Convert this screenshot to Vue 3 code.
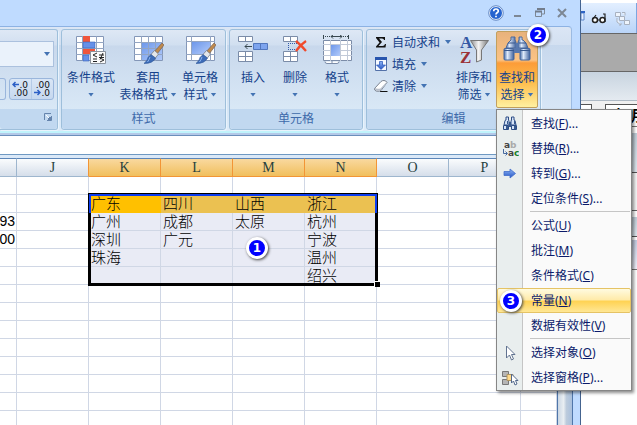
<script setup>
import { ref } from 'vue'

const columns = ['', 'J', 'K', 'L', 'M', 'N', 'O', 'P', '']
const selected = ['K', 'L', 'M', 'N']
const rows = [
  ['', '', '', '', '', '', '', '', ''],
  ['', '', '广东', '四川', '山西', '浙江', '', '', ''],
  ['93', '', '广州', '成都', '太原', '杭州', '', '', ''],
  ['00', '', '深圳', '广元', '', '宁波', '', '', ''],
  ['', '', '珠海', '', '', '温州', '', '', ''],
  ['', '', '', '', '', '绍兴', '', '', ''],
  ...Array.from({ length: 8 }, () => Array(9).fill(''))
]

const isSelected = (r, c) => r >= 1 && r <= 5 && c >= 2 && c <= 5

const menuGroups = [
  [
    { label: '查找', key: 'F', dots: true, icon: 'find' },
    { label: '替换', key: 'R', dots: true, icon: 'replace' },
    { label: '转到', key: 'G', dots: true, icon: 'goto' },
    { label: '定位条件', key: 'S', dots: true }
  ],
  [
    { label: '公式', key: 'U' },
    { label: '批注', key: 'M' },
    { label: '条件格式', key: 'C' },
    { label: '常量', key: 'N', badge: 3 },
    { label: '数据有效性', key: 'V' }
  ],
  [
    { label: '选择对象', key: 'O', icon: 'pointer' },
    { label: '选择窗格', key: 'P', dots: true, icon: 'pane' }
  ]
]
const active = ref('N')
</script>

<template>
  <div class="desktop">
    <svg class="defs" width="0" height="0" aria-hidden="true">
      <defs>
        <linearGradient id="blueCell" x1="0" y1="0" x2="1" y2="1">
          <stop offset="0" stop-color="#6d97ea" /><stop offset="1" stop-color="#b1cafa" />
        </linearGradient>
        <linearGradient id="steel" x1="0" y1="0" x2="1" y2="0">
          <stop offset="0" stop-color="#4a6ea8" /><stop offset=".35" stop-color="#dfeafa" /><stop offset="1" stop-color="#3c5f9c" />
        </linearGradient>
        <linearGradient id="funnel" x1="0" y1="0" x2="1" y2="0">
          <stop offset="0" stop-color="#8b8b8b" /><stop offset=".45" stop-color="#f4f4f4" /><stop offset="1" stop-color="#777" />
        </linearGradient>
        <linearGradient id="arrowBlue" x1="0" y1="0" x2="0" y2="1">
          <stop offset="0" stop-color="#8db5f5" /><stop offset="1" stop-color="#2454c4" />
        </linearGradient>
        <symbol id="brush" viewBox="0 0 20 22">
          <path d="M18 1 L20 3 L13 12 L10 10Z" fill="#c08a4c" stroke="#7c6450" stroke-width=".7" />
          <path d="M10.500 8.500 L14.500 12 L11 16.500 L6.500 13Z" fill="#e3e6ea" stroke="#777f8a" stroke-width=".8" />
          <path d="M7 12.500 L11.500 16 Q9 21.500 0 21.500 Q4 18 4 15.500Z" fill="#3d6cb8" stroke="#254f94" stroke-width=".6" />
          <path d="M6 15 Q5 18 3.500 20" stroke="#8cb5ee" fill="none" />
        </symbol>
        <symbol id="binoculars" viewBox="0 0 28 25">
          <path d="M9 1h3v3l1 2v6H3l2-5 3-3V1Z" fill="url(#steel)" stroke="#4a6799" />
          <path d="M16 1h3v3l1 0 3 3 2 5H15V6l1-2Z" fill="url(#steel)" stroke="#4a6799" />
          <rect x="1" y="12.500" width="10" height="11.500" rx="1" fill="url(#steel)" stroke="#45669d" />
          <rect x="17" y="12.500" width="10" height="11.500" rx="1" fill="url(#steel)" stroke="#45669d" />
          <path d="M11 12h6v5h-6ZM12.500 7h3v5h-3Z" fill="#5878ae" />
          <path d="M1 14.500h10M17 14.500h10M5 7h7M16 7h7" stroke="#38598f" />
        </symbol>
      </defs>
    </svg>

    <main class="excel">
      <header class="titlebar">
        <button class="win help" aria-label="帮助">
          <svg width="16" height="16" viewBox="0 0 16 16"><circle cx="8" cy="8" r="6.500" fill="#2563cf" stroke="#f4f9ff" /><circle cx="8" cy="8" r="7.300" fill="none" stroke="#5578b5" stroke-width=".8" /><path d="M5.700 6.300Q5.700 4 8 4T10.300 6.200C10.300 7.500 8 7.600 8 9.500M8 10.700v1.600" fill="none" stroke="#fff" stroke-width="1.700" /></svg>
        </button>
        <button class="win" aria-label="最小化"><svg width="10" height="10"><path d="M1 8h7" stroke="#7d8794" stroke-width="2" /></svg></button>
        <button class="win" aria-label="还原"><svg width="10" height="10"><path d="M3 1.500h7M9.500 1v5H7M.5 3v5.500h6V3" stroke="#7d8794" fill="none" /><path d="M0 3.500h7M2 1h8" stroke="#737d8c" stroke-width="2" /></svg></button>
        <button class="win" aria-label="关闭"><svg width="10" height="10"><path d="M1 1l8 8M9 1l-8 8" stroke="#7d8794" stroke-width="2" /></svg></button>
      </header>

      <div class="ribbon">
        <section class="group number">
          <div class="content">
            <div class="combo">
              <select aria-label="数字格式"><option></option></select>
              <i class="arrow"></i>
            </div>
            <div class="decimals">
              <button class="piece" aria-label="千位分隔"></button>
              <div class="pair">
                <button aria-label="增加小数位数"><span><svg width="7" height="7" viewBox="0 0 7 7"><path d="M7 3.500H2M3.500 1L1 3.500 3.500 6" stroke="#2c5fc6" stroke-width="1.500" fill="none" /></svg>.0</span><span>.00</span></button>
                <button aria-label="减少小数位数"><span>.00</span><span><svg width="7" height="7" viewBox="0 0 7 7"><path d="M0 3.500h5M3.500 1L6 3.500 3.500 6" stroke="#2c5fc6" stroke-width="1.500" fill="none" /></svg>.0</span></button>
              </div>
            </div>
          </div>
          <h2><button class="launcher" aria-label="更多"><svg width="8" height="8"><path d="M.5 7V.5H7" stroke="#6584ad" fill="none" /><path d="M7.500 3v4.500H3" stroke="#6584ad" fill="none" /><path d="M4 4h3v3H4Z" fill="#6584ad" /><path d="M2 2l3 3" stroke="#fff" /></svg></button></h2>
        </section>

        <section class="group styles">
          <div class="content">
            <button class="big">
              <svg width="32" height="30" viewBox="0 0 32 30">
                <path d="M1.500 1.500h27v24h-27Z" fill="#fff" stroke="#8497b8" />
                <path d="M1 7.500h28M1 13.500h28M1 19.500h28M7.500 1v25M21.500 1v25" stroke="#93a5c2" />
                <path d="M8 1h7v6H8ZM8 14h12v5H8Z" fill="#f0553c" /><path d="M8 7h12v6H8ZM8 20h6v6H8Z" fill="#6690e8" stroke="#3563ba" stroke-width=".6" />
                <path d="M15.500 16.500h15v12h-15Z" fill="#fafafa" stroke="#8a929c" />
                <path d="M22 18l-4 2 4 2M18 24h4M18 26.500h4M24 20h5M24 22.500h5M28 18l-3 6.500M25 23l4 2-4 2" stroke="#222" fill="none" />
              </svg>
              <span>条件格式</span><span class="line"><i class="arrow"></i></span>
            </button>
            <button class="big wide">
              <svg width="32" height="30" viewBox="0 0 32 30">
                <path d="M2.500 1.500h28v24h-28Z" fill="#fff" stroke="#8497b8" /><path d="M9 8h21v17H9Z" fill="url(#blueCell)" />
                <path d="M2 7.500h29M2 13.500h29M2 19.500h29M9.500 1v25M16.500 1v25M23.500 1v25" stroke="#93a5c2" />
                <use href="#brush" x="12" y="7" width="20" height="22" />
              </svg>
              <span>套用</span><span class="line">表格格式<i class="arrow"></i></span>
            </button>
            <button class="big small">
              <svg width="32" height="30" viewBox="0 0 32 30">
                <path d="M2.500 1.500h28v24h-28Z" fill="#fff" stroke="#8497b8" /><path d="M2 6.500h29M2 19.500h29M7.500 1v25M26.500 1v25" stroke="#93a5c2" />
                <path d="M8 7h18v12H8Z" fill="url(#blueCell)" />
                <use href="#brush" x="12" y="7" width="20" height="22" />
              </svg>
              <span>单元格</span><span class="line">样式<i class="arrow"></i></span>
            </button>
          </div>
          <h2>样式</h2>
        </section>

        <section class="group cells">
          <div class="content">
            <button class="big cell">
              <svg width="32" height="30" viewBox="0 0 32 30">
                <path d="M1.500 1.500h14v5h-14ZM1.500 16.500h14v10h-14ZM8.500 1v6M8.500 16v11M1 21.500h15" fill="#fff" stroke="#7b8ca8" />
                <path d="M16.500 8.500h14v6h-14ZM23.500 8v7" fill="#7da4ee" stroke="#5277bd" /><path d="M15 11.500H8M10.500 9L8 11.500l2.500 2.500" stroke="#37474f" fill="none" />
              </svg>
              <span>插入</span><span class="line"><i class="arrow"></i></span>
            </button>
            <button class="big cell">
              <svg width="32" height="30" viewBox="0 0 32 30">
                <path d="M4.500 1.500h14v5h-14ZM4.500 16.500h14v10h-14ZM11.500 1v6M11.500 16v11M4 21.500h15" fill="#fff" stroke="#7b8ca8" />
                <path d="M9 8.500h9M9 14.500h9M9.500 8v7" stroke="#345caa" stroke-dasharray="1 1" />
                <path d="M17 6q5 4 10 10M27 6q-6 4-10 10" stroke="#f04a2c" stroke-width="2.300" fill="none" />
              </svg>
              <span>删除</span><span class="line"><i class="arrow"></i></span>
            </button>
            <button class="big cell">
              <svg width="32" height="30" viewBox="0 0 32 30">
                <path d="M2.500 0v4M27.500 0v4M10 1.500h11M12 0l-2 1.500 2 2M19 0l2 1.500-2 2" stroke="#37474f" fill="none" /><path d="M4 1.500h5M22 1.500h5" stroke="#37474f" stroke-dasharray="1 1" />
                <path d="M2.500 5.500h28v20h-28Z" fill="#fff" stroke="#7b8ca8" /><path d="M2 9.500h29M2 20.500h29M9.500 5v21M19.500 5v21M26.500 5v21M2 15.500h29" stroke="#c2cad8" />
                <path d="M10 10h9v11h-9Z" fill="url(#blueCell)" /><path d="M4 26.500q0 2 2 2h10q2 0 2-2M11 26v2" fill="#fff" stroke="#7b8ca8" />
              </svg>
              <span>格式</span><span class="line"><i class="arrow"></i></span>
            </button>
          </div>
          <h2>单元格</h2>
        </section>

        <section class="group editing">
          <div class="content">
            <div class="stack">
              <button><svg width="16" height="16" viewBox="0 0 16 16"><path d="M3 3h9v3h-1Q11 4.500 9 4.500H6L9 8l-3.500 4H9.500Q11.500 12 12 10h1l-.5 3.500H3v-1L6.500 8.500 3 4Z" fill="#111" /></svg>自动求和<i class="arrow"></i></button>
              <button><svg width="16" height="16" viewBox="0 0 16 16"><path d="M2.500 1.500h11v13h-11Z" fill="#f6faff" stroke="#5371a8" /><path d="M2 2.500h12" stroke="#2855ae" stroke-width="3" /><path d="M6.500 5.500h3v3.500H12.500L8 13.500 3.500 9h3Z" fill="url(#arrowBlue)" stroke="#2150b7" stroke-width=".7" /></svg>填充<i class="arrow"></i></button>
              <button><svg width="16" height="16" viewBox="0 0 16 16"><path d="M7 13.500h7.500" stroke="#111" /><path d="M1.500 10.500L8 3.500q1-1 3-1t3 2L8 12.500q-2 1.500-5 .5-2-1-1.500-2.500Z" fill="#fff" stroke="#798290" /><path d="M2 9.500q1 2 5.500 1L13.500 4v1.500L8 12q-4 2-6-.500Z" fill="#b8c0cc" /></svg>清除<i class="arrow"></i></button>
            </div>
            <button class="big small">
              <svg width="32" height="30" viewBox="0 0 32 30">
                <path d="M12.500 5.500h18L23.500 15v10l-5 2V15Z" fill="url(#funnel)" stroke="#777" />
                <text x="2" y="13" class="letter a">A</text><text x="2" y="28" class="letter z">Z</text>
              </svg>
              <span>排序和</span><span class="line">筛选<i class="arrow"></i></span>
            </button>
            <button class="big find" aria-expanded="true">
              <svg width="32" height="30" viewBox="0 0 32 30"><use href="#binoculars" x="2" y="1" width="28" height="25" /></svg>
              <span>查找和</span><span class="line">选择<i class="arrow"></i></span>
              <b class="badge two">2</b>
            </button>
          </div>
          <h2>编辑</h2>
        </section>
      </div>

      <div class="divider"></div>
      <div class="formula"></div>
      <div class="strip"></div>

      <div class="sheet">
        <div class="grid">
          <table>
            <colgroup><col class="first"><col v-for="n in 7" :key="n" class="std"><col></colgroup>
            <thead>
              <tr><th v-for="(c, i) in columns" :key="i" :class="{ on: selected.includes(c), before: c === 'J' }">{{ c }}</th></tr>
            </thead>
            <tbody>
              <tr v-for="(row, r) in rows" :key="r">
                <td v-for="(cell, c) in row" :key="c" :class="{ sel: isSelected(r, c), gold: isSelected(r, c) && r === 1, current: r === 1 && c === 2, num: c === 0 }">{{ cell }}</td>
              </tr>
            </tbody>
          </table>
          <div class="selection"><i class="edge"></i><i class="handle"></i></div>
          <b class="badge one">1</b>
        </div>
        <div class="scroll"></div>
      </div>
    </main>

    <aside class="behind">
      <div class="tools">
        <svg width="56" height="30" viewBox="0 0 56 30">
          <path d="M0 10h3v7H0Z" fill="#e8f1ff" stroke="#5c86cc" /><path d="M0 9h4" stroke="#2f64c4" stroke-width="2" />
          <circle cx="14" cy="17" r="2.500" fill="#fff" stroke="#222" stroke-width="1.500" /><circle cx="21.500" cy="17" r="2.500" fill="#fff" stroke="#222" stroke-width="1.500" /><path d="M12 16l3-4M16.500 17h2.500M24 19v-8h-2" stroke="#222" stroke-width="1.200" fill="none" />
          <path d="M34.500 9.500h5v4h-5ZM38.500 13.500h5v4h-5ZM43.500 17.500h5v4h-5ZM41 9.500h3v3M36 15v4l4 3M38 22h2v-2" stroke="#a8b1bf" fill="#eef4fc" />
        </svg>
      </div>
      <div class="gray"></div>
      <div class="bar"></div>
      <div class="fields"><span></span><span>声明</span></div>
      <div class="side"></div>
      <div class="blank"></div>
      <div class="side short"></div>
      <div class="tab"></div>
    </aside>

    <nav class="menu" role="menu">
      <div v-for="(group, g) in menuGroups" :key="g" class="section">
        <button v-for="item in group" :key="item.key" role="menuitem" :class="{ active: active === item.key }" @mouseenter="active = item.key">
          <span class="glyph">
            <svg v-if="item.icon === 'find'" width="16" height="16" viewBox="0 0 16 16"><path d="M4 1h2.500v3L7 5v4H2L3 4.500 4 4ZM9.500 1H12v3l1 .5L14 9H9V5l.5-1ZM1.500 9.500h5v4h-5ZM9.500 9.500h5v4h-5Z" fill="#d5e3f7" stroke="#2c4c85" /><path d="M7 6h2v5H7ZM5 5h1v3H5ZM12 5h1v3h-1ZM4 10h2v3H4ZM12 10h2v3h-2Z" fill="#37598f" /></svg>
            <svg v-else-if="item.icon === 'replace'" width="18" height="18" viewBox="0 0 18 18"><text x="3" y="8" class="ab">a<tspan fill="#aaa">b</tspan></text><text x="7" y="16" class="ab">a<tspan fill="#168028">c</tspan></text><path d="M2.500 9v4.500H6M4.500 11.500l2 2-2 2" stroke="#46699f" fill="none" /></svg>
            <svg v-else-if="item.icon === 'goto'" width="16" height="16" viewBox="0 0 16 16"><path d="M2 5.500h6V3l5.500 4.500L8 12V9.500H2Z" fill="url(#arrowBlue)" stroke="#416dca" stroke-width=".8" /></svg>
            <svg v-else-if="item.icon === 'pointer'" width="16" height="16" viewBox="0 0 16 16"><path d="M4.500 1v12l3-3 2 5 2-1-2-4.500H13Z" fill="#fff" stroke="#617390" /></svg>
            <svg v-else-if="item.icon === 'pane'" width="18" height="16" viewBox="0 0 18 16"><path d="M1.500 1.500h6v5h-6ZM1.500 9.500h6v5h-6Z" fill="#b5b5b5" stroke="#777" /><path d="M6 4.500h6v6H6Z" fill="#ffd98a" stroke="#b09560" /><path d="M10.500 4v9l2-2 1.500 4 2-1-1.500-3.500H17Z" fill="#fff" stroke="#53698c" /></svg>
          </span>
          <span>{{ item.label }}(<u>{{ item.key }}</u>){{ item.dots ? '...' : '' }}</span>
          <b v-if="item.badge" class="badge three">{{ item.badge }}</b>
        </button>
      </div>
    </nav>
  </div>
</template>

<style>
body { margin: 0; }
</style>

<style scoped>
* { box-sizing: border-box; }
.desktop { position: relative; display: flex; height: 100vh; overflow: hidden; background: #fff; font: 12px/17px "Noto Sans", "Noto Sans CJK SC", sans-serif; color: #15428b; }
.defs { position: absolute; }
button { margin: 0; padding: 0; border: 0; background: none; font: inherit; color: inherit; }
svg { display: block; flex: none; }
.excel { flex: 1; min-width: 0; display: flex; flex-direction: column; padding-right: 7px; background: #bfdbff; border-right: 1px solid #44638f; }
.titlebar { flex: none; display: flex; align-items: center; justify-content: flex-end; gap: 12px; height: 26px; padding-right: 6px; }
.help { margin-right: -3px; }

.ribbon { flex: none; display: flex; gap: 3px; margin-right: 1px; padding: 2px 0 1px; border-top: 1px solid #8db2e3; border-right: 1px solid #9cbbe2; border-bottom: 2px solid #c0f4fc; border-radius: 0 4px 0 0; background: linear-gradient(#dbe6f5 0, #d3e0f1 18px, #c7d8ed 18px, #dcebf9 100%); }
.group { flex: none; display: flex; flex-direction: column; height: 101px; border: 1px solid #9ebfdb; border-radius: 3px; background: linear-gradient(#dee8f5 0, #d1dff0 15px, #c8d8ec 16px, #d9e8f6 80px); box-shadow: 1px 1px #e8f3fc; }
.content { flex: 1; display: flex; padding: 1px 2px; }
.group h2 { flex: none; height: 20px; margin: 0; background: #c1d8f0; font-size: 12px; font-weight: 400; line-height: 19px; text-align: center; color: #3e6aaa; border-radius: 0 0 3px 3px; }
.number { width: 58px; border-left: 0; border-radius: 0 3px 3px 0; }
.styles { width: 165px; }
.cells { width: 134px; }
.editing { width: 175px; }
.number .content { flex-direction: column; gap: 11px; padding: 11px 3px 0 0; }
.combo { position: relative; height: 26px; }
.combo select { width: 100%; height: 26px; appearance: none; border: 1px solid #abc1de; border-left: 0; border-radius: 0; background: #eaf2fb; }
.combo .arrow { position: absolute; right: 4px; top: 11px; }
.decimals { display: flex; gap: 3px; }
.piece { width: 6px; border: 1px solid #9ab6dc; border-left: 0; border-radius: 0 3px 3px 0; }
.pair { flex: 1; display: flex; height: 22px; border: 1px solid #9ab6dc; border-radius: 3px; background: linear-gradient(#d9e6f6, #c6d8ef); }
.pair button { flex: 1; display: flex; flex-direction: column; align-items: flex-end; justify-content: center; padding-right: 3px; font: 9px/8px "DejaVu Sans", sans-serif; color: #111; }
.pair button + button { border-left: 1px solid #b5cbe7; }
.pair span { display: flex; }
.number h2 { display: flex; justify-content: flex-end; padding: 4px 5px 0 0; }
.launcher { height: 8px; }
.arrow { display: inline-block; flex: none; width: 6px; height: 4px; background: #4373b3; clip-path: polygon(0 0, 100% 0, 50% 100%); }

.big { position: relative; display: flex; flex-direction: column; align-items: center; width: 54px; padding-top: 4px; white-space: nowrap; }
.big svg { margin-bottom: 4px; }
.big .line { display: flex; align-items: center; gap: 3px; min-height: 17px; }
.big.wide { width: 60px; }
.big.small { width: 44px; }
.big.cell { width: 42px; }
.big.find { width: 42px; border: 1px solid #c2a05e; border-radius: 2px; padding-top: 3px; background: linear-gradient(#e8b27c 0, #fbc384 28px, #fc9c38 31px, #fdbd4b 50px, #fff0a0 100%); }
.letter { font: bold 17px "Liberation Serif", serif; }
.letter.a { fill: #3558a4; }
.letter.z { fill: #9b3236; }
.stack { display: flex; flex-direction: column; width: 83px; }
.stack button { display: flex; align-items: center; height: 22px; padding-left: 4px; gap: 3px; }
.stack .arrow { margin-left: 2px; }

.divider { flex: none; height: 3px; background: #b4c9e8; border-bottom: 1px solid #6b8fbc; }
.formula { flex: none; height: 19px; background: #fff; border-bottom: 1px solid #6f99c2; }
.strip { flex: none; height: 3px; background: #dbe9f8; }
.sheet { flex: 1; min-height: 0; display: flex; }
.grid { position: relative; flex: 1; min-width: 0; overflow: hidden; background: #fff; }
.scroll { width: 16px; border: solid #4f76aa; border-width: 1px 1px 0; background: linear-gradient(90deg, #cbd7e4, #e9eef2 40%, #bccbdc 60%, #a9c0dd); }
table { width: 100%; table-layout: fixed; border-collapse: separate; border-spacing: 0; }
.first { width: 17px; }
.std { width: 72px; }
th, td { height: 18px; padding: 0; white-space: nowrap; font-size: 15px; line-height: 17px; font-weight: 400; }
th { height: 19px; border: solid #5d86b8; border-width: 1px 1px 1px 0; border-right-color: #9eb6ce; border-bottom-color: #9eb6ce; background: linear-gradient(#fafcfd, #d5deea); font-family: "Liberation Serif", serif; font-size: 14px; color: #27413e; }
th.on { border-right-color: #f29536; border-bottom-color: #f29536; background: linear-gradient(#f9d99f, #f1bf5d); }
th.before { border-right-color: #f29536; }
td { border: solid #d0d7e5; border-width: 0 1px 1px 0; padding-left: 2px; color: #000; font-weight: 300; }
td.num { padding: 0 2px 0 0; direction: rtl; font: 14px/17px "Liberation Sans", sans-serif; }
td.sel { background: #e9ebf5; }
td.gold { background: #ebc151; border-color: #ebc151; }
td.current { background: #ffc000; border-color: #ffc000; }
.selection { position: absolute; left: 88px; top: 35px; width: 290px; height: 93px; border: 3px solid #000; }
.edge { position: absolute; inset: -2px -2px auto; height: 19px; border: 2px solid #0a3cf0; border-bottom: 0; }
.handle { position: absolute; right: -5px; bottom: -4px; width: 6px; height: 6px; background: #000; border: solid #fff; border-width: 1px 0 0 1px; }

.badge { position: absolute; z-index: 2; width: 22px; height: 22px; border: 3px solid #fff; border-radius: 50%; background: #00f; box-shadow: 1px 1px 3px #444; font: bold 12px/16px "DejaVu Sans", sans-serif; text-align: center; color: #fff; }
.badge.one { left: 246px; top: 79px; }
.badge.two { right: -12px; top: -8px; }
.badge.three { left: 2px; top: 1px; }

.behind { flex: none; width: 56px; display: flex; flex-direction: column; padding-top: 3px; background: #fff; }
.tools { flex: none; height: 30px; border-right: 1px solid #7ca6e0; background: linear-gradient(#e3efff, #b9d4f8); }
.gray { flex: none; height: 39px; border: solid #666; border-width: 1px 0; background: #aaa; }
.bar { flex: none; height: 29px; background: linear-gradient(#c8d4e0, #e4eaf0); border-bottom: 1px solid #aeb9c4; }
.fields { flex: none; display: flex; gap: 13px; height: 26px; padding-top: 3px; background: #f0f0f0; border-bottom: 1px solid #777; }
.fields span { width: 11px; border: solid #555; border-width: 1px 1px 0 0; background: #fff; overflow: hidden; }
.fields span + span { flex: 1; padding-left: 5px; border-width: 1px 0 0 1px; font: bold 15px/20px "Noto Sans CJK SC", sans-serif; white-space: nowrap; color: #000; }
.side { flex: none; height: 40px; margin-top: 6px; background: linear-gradient(#c1ced9, #dee6ed); border-bottom: 1px solid #555; }
.blank { flex: none; height: 38px; background: #f4f4f4; border: solid #666; border-width: 0 0 1px; }
.side.short { height: 20px; }
.tab { flex: none; height: 30px; margin-top: 3px; background: linear-gradient(#c3cbe0, #f0f0fa); border-bottom: 1px solid #777; }

.menu { position: absolute; z-index: 1; top: 109px; right: 5px; width: 136px; padding-top: 1px; border: 1px solid #868686; background: linear-gradient(90deg, #e9eeee 25px, #c5c5c5 25px, #c5c5c5 26px, #fafafa 26px); box-shadow: 2px 2px 3px rgba(0, 0, 0, .45); color: #0b1a6a; }
.section + .section { position: relative; padding-top: 2px; }
.section + .section::before { content: ""; position: absolute; top: 0; left: 33px; right: 1px; height: 1px; background: #c5c5c5; }
.menu button { position: relative; display: flex; align-items: center; width: 100%; height: 25px; border: 1px solid transparent; white-space: nowrap; }
.glyph { display: flex; justify-content: center; width: 24px; margin-right: 9px; }
.menu button.active { border-color: #e5c365; border-radius: 2px; background: linear-gradient(#fffbe0 0, #ffeaa8 11px, #ffd252 12px, #ffe795 100%) padding-box; }
.ab { font: bold 9px "DejaVu Sans", sans-serif; fill: #444; }
</style>
